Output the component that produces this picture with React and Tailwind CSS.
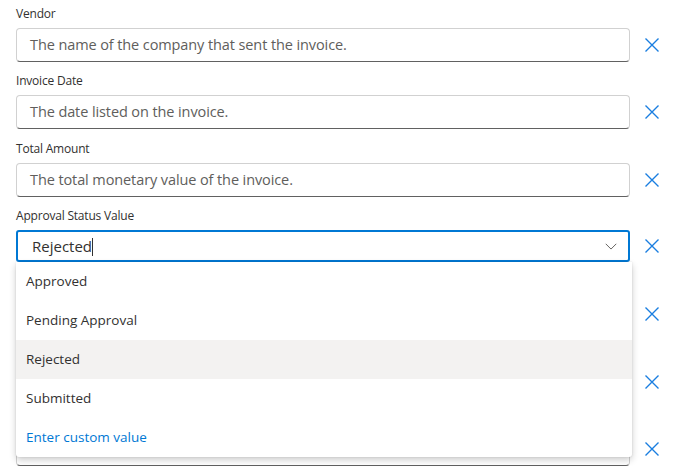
import { useState } from "react";

// rows 5-7 sit under the open dropdown, only their borders and clear buttons show
const fields = [
  { label: "Vendor", placeholder: "The name of the company that sent the invoice." },
  { label: "Invoice Date", placeholder: "The date listed on the invoice." },
  { label: "Total Amount", placeholder: "The total monetary value of the invoice." },
  { label: "Approval Status Value", combo: true },
  { label: "", placeholder: "" },
  { label: "", placeholder: "" },
  { label: "", placeholder: "" },
];

const options = ["Approved", "Pending Approval", "Rejected", "Submitted"];

function ClearIcon() {
  return (
    <button className="w-8 h-8 flex items-center justify-center shrink-0 text-[#1a7ee0]">
      <svg width="16" height="16" viewBox="0 0 16 16" fill="none">
        <path d="M1.5 1.5 L14.5 14.5 M14.5 1.5 L1.5 14.5" stroke="currentColor" strokeWidth="1.4" />
      </svg>
    </button>
  );
}

function Combo() {
  const [value] = useState("Rejected");
  return (
    <div className="relative flex-1">
      <div className="h-[32px] border-2 border-[#0078d4] rounded-[3px] bg-white flex items-center pl-[14px] pr-[10px]">
        <span className="text-[15px] text-[#323130] flex-1">
          {value}
          <span className="inline-block w-px h-[18px] bg-[#323130] align-middle -mt-[2px]" />
        </span>
        <svg width="14" height="14" viewBox="0 0 16 16" fill="none" className="text-[#605e5c]">
          <path d="M2 5.5 L8 11.5 L14 5.5" stroke="currentColor" strokeWidth="1.1" />
        </svg>
      </div>
      <div className="absolute left-0 top-[32px] w-[616px] bg-white rounded-b-[3px] shadow-[0_3px_7px_rgba(0,0,0,0.2),0_0_2px_rgba(0,0,0,0.12)] z-10">
        {options.map((o) => (
          <div
            key={o}
            className={
              "h-[39px] flex items-center px-[10px] text-[13.5px] text-[#323130] " +
              (o === value ? "bg-[#f3f2f1]" : "")
            }
          >
            {o}
          </div>
        ))}
        <div className="h-[39px] flex items-center px-[10px] text-[13.5px] text-[#0078d4]">
          Enter custom value
        </div>
      </div>
    </div>
  );
}

export default function App() {
  return (
    <div
      className="w-[682px] h-[473px] overflow-hidden bg-white pl-4 pr-[14px] pt-[1px]"
      style={{ fontFamily: "'Open Sans', 'Noto Sans', sans-serif" }}
    >
      {fields.map((f, i) => (
        <div key={i} className="h-[67.33px] flex flex-col">
          <label className="pt-[3px] h-[23px] leading-[20px] mb-[4px] text-[12px] tracking-[-0.2px] text-[#323130]">
            {f.label}
          </label>
          <div className="flex items-center gap-[6px]">
            {f.combo ? (
              <Combo />
            ) : (
              <div className="flex-1 h-[34px] bg-white border border-[#d1d1d1] border-b-[#616161] rounded-[4px] flex items-center pl-[13px]">
                <span className="text-[14.5px] text-[#605e5c] tracking-[-0.1px]">{f.placeholder}</span>
              </div>
            )}
            <ClearIcon />
          </div>
        </div>
      ))}
    </div>
  );
}
